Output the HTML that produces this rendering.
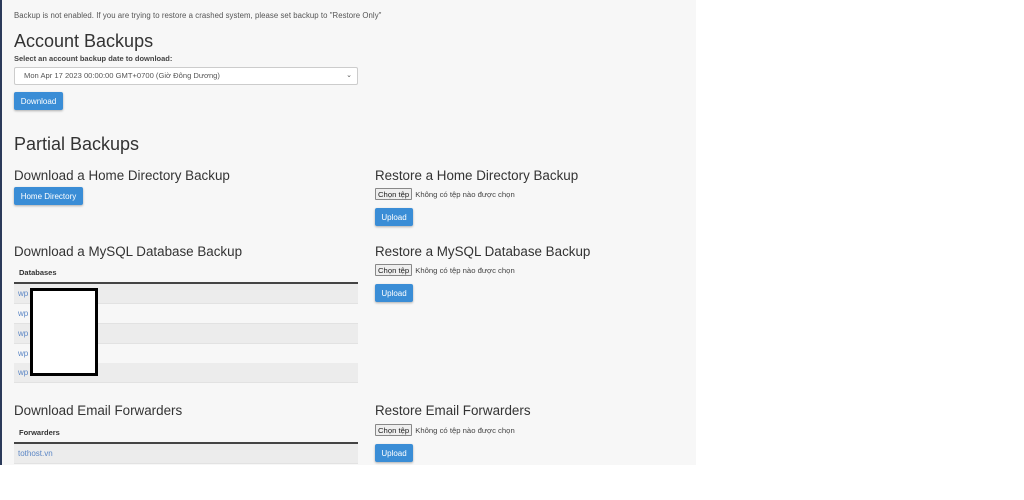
<!DOCTYPE html>
<html><head><meta charset="utf-8"><style>
*{margin:0;padding:0;box-sizing:border-box}
body{width:1024px;height:500px;background:#fff;font-family:"Liberation Sans","DejaVu Sans",sans-serif;position:relative;overflow:hidden;color:#333}
#bg{position:absolute;left:0;top:0;width:696px;height:465px;background:#f7f7f7;border-left:2px solid #2b3a5a}
.a{position:absolute;white-space:nowrap}
.h1{font-size:18px;color:#333}
.h3{font-size:13.4px;color:#333}
.btn{position:absolute;background:#3a8dd6;color:#fff;font-size:8px;border-radius:2px;box-shadow:0 1px 2px rgba(0,0,0,.3);display:flex;align-items:center;justify-content:center}
.file{position:absolute;font-size:7.7px;color:#444;display:flex;align-items:center}
.file span{border:1px solid #888;background:#eee;padding:0 2px;height:12px;line-height:11px;color:#222;margin-right:3px;border-radius:1px}
.th{position:absolute;font-size:7.5px;font-weight:bold;color:#333}
.line{position:absolute;left:14px;width:344px;height:2px;background:#444}
.row{position:absolute;left:14px;width:344px;height:20px;border-bottom:1px solid #e2e2e2;font-size:8px;color:#5b86c5;padding-left:4px;line-height:19px}
</style></head><body>
<div id="bg"></div>
<div class="a" style="left:14px;top:11px;font-size:7.8px;color:#555;letter-spacing:0.05px">Backup is not enabled. If you are trying to restore a crashed system, please set backup to "Restore Only"</div>
<div class="a h1" style="left:14px;top:31px">Account Backups</div>
<div class="a" style="left:14px;top:54px;font-size:7.5px;font-weight:bold;color:#444">Select an account backup date to download:</div>
<div class="a" style="left:14px;top:67px;width:344px;height:18px;background:#fff;border:1px solid #ccc;border-radius:2px;font-size:7.6px;color:#555;padding-left:9px;line-height:16px">Mon Apr 17 2023 00:00:00 GMT+0700 (Giờ Đông Dương)<span style="position:absolute;right:5px;top:0;font-size:7px">⌄</span></div>
<div class="btn" style="left:14px;top:92px;width:49px;height:18px">Download</div>
<div class="a h1" style="left:14px;top:134px">Partial Backups</div>
<div class="a h3" style="left:14px;top:168px">Download a Home Directory Backup</div>
<div class="btn" style="left:14px;top:187px;width:69px;height:18px">Home Directory</div>
<div class="a h3" style="left:375px;top:168px">Restore a Home Directory Backup</div>
<div class="file" style="left:375px;top:188px"><span>Chọn tệp</span>Không có tệp nào được chọn</div>
<div class="btn" style="left:375px;top:208px;width:38px;height:18px">Upload</div>

<div class="a h3" style="left:14px;top:244px">Download a MySQL Database Backup</div>
<div class="th" style="left:19px;top:268px">Databases</div>
<div class="line" style="top:282px"></div>
<div class="row" style="top:284px;background:#ececec">wp</div>
<div class="row" style="top:304px">wp</div>
<div class="row" style="top:324px;background:#ececec">wp</div>
<div class="row" style="top:344px">wp</div>
<div class="row" style="top:363px;background:#ececec">wp</div>
<div class="a" style="left:30px;top:288px;width:68px;height:88px;background:#fff;border:3px solid #000"></div>
<div class="a h3" style="left:375px;top:244px">Restore a MySQL Database Backup</div>
<div class="file" style="left:375px;top:264px"><span>Chọn tệp</span>Không có tệp nào được chọn</div>
<div class="btn" style="left:375px;top:284px;width:38px;height:18px">Upload</div>

<div class="a h3" style="left:14px;top:403px">Download Email Forwarders</div>
<div class="th" style="left:19px;top:428px">Forwarders</div>
<div class="line" style="top:442px"></div>
<div class="row" style="top:444px;background:#ececec">tothost.vn</div>
<div class="a h3" style="left:375px;top:403px">Restore Email Forwarders</div>
<div class="file" style="left:375px;top:424px"><span>Chọn tệp</span>Không có tệp nào được chọn</div>
<div class="btn" style="left:375px;top:444px;width:38px;height:18px">Upload</div>
</body></html>
